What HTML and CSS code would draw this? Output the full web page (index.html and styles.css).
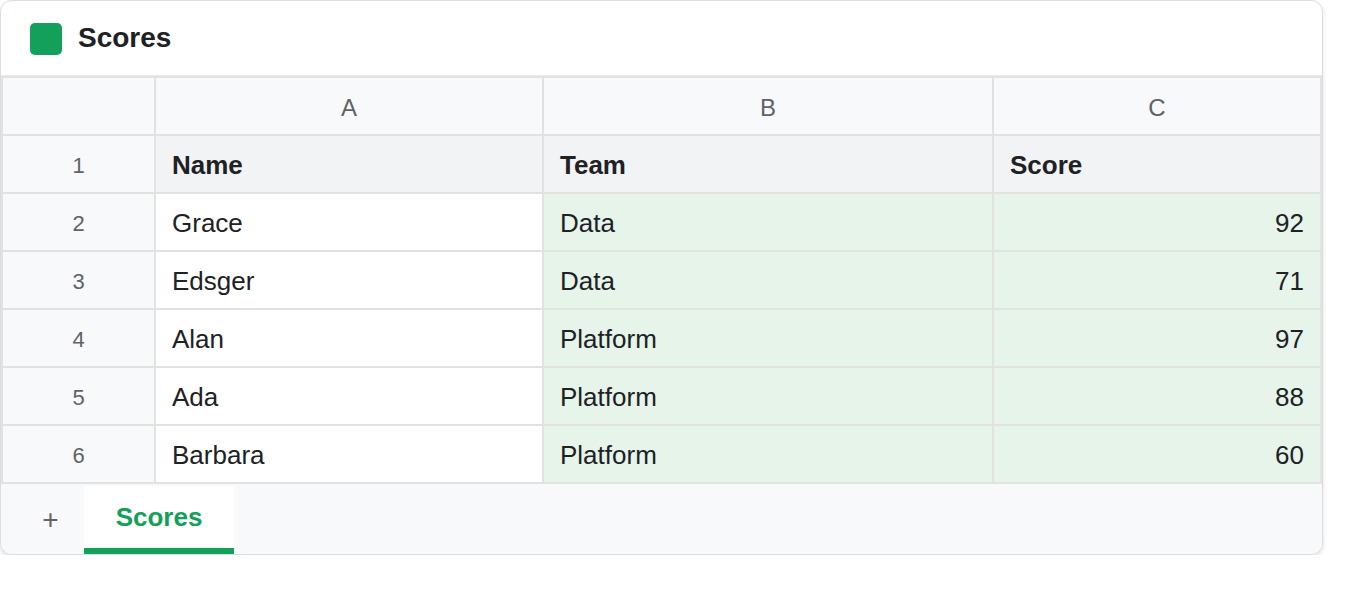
FILE: index.html
```html
<!DOCTYPE html>
<html lang="en">
<head>
<meta charset="utf-8">
<title>Scores</title>
<link rel="stylesheet" href="styles.css">
</head>
<body>
<div class="card">
  <div class="header">
    <span class="logo"></span>
    <h1 class="title">Scores</h1>
  </div>
  <div class="grid">
    <div class="cell corner"></div>
    <div class="cell colhead">A</div>
    <div class="cell colhead">B</div>
    <div class="cell colhead">C</div>

    <div class="cell rowhead">1</div>
    <div class="cell headrow">Name</div>
    <div class="cell headrow">Team</div>
    <div class="cell headrow">Score</div>

    <div class="cell rowhead">2</div>
    <div class="cell">Grace</div>
    <div class="cell hl">Data</div>
    <div class="cell hl num">92</div>

    <div class="cell rowhead">3</div>
    <div class="cell">Edsger</div>
    <div class="cell hl">Data</div>
    <div class="cell hl num">71</div>

    <div class="cell rowhead">4</div>
    <div class="cell">Alan</div>
    <div class="cell hl">Platform</div>
    <div class="cell hl num">97</div>

    <div class="cell rowhead">5</div>
    <div class="cell">Ada</div>
    <div class="cell hl">Platform</div>
    <div class="cell hl num">88</div>

    <div class="cell rowhead">6</div>
    <div class="cell">Barbara</div>
    <div class="cell hl">Platform</div>
    <div class="cell hl num">60</div>
  </div>
  <div class="tabs">
    <button class="add" type="button">+</button>
    <div class="tab active">Scores</div>
  </div>
</div>
</body>
</html>
```

FILE: styles.css
```css
html, body {
  margin: 0;
  padding: 0;
  background: #ffffff;
}

body {
  font-family: "Liberation Sans", Arial, sans-serif;
  color: #202124;
}

.card {
  width: 1323px;
  box-sizing: border-box;
  border: 1px solid #dcdde0;
  border-radius: 12px;
  overflow: hidden;
  background: #ffffff;
  box-shadow: 0 2px 4px rgba(0, 0, 0, 0.13);
}

.header {
  height: 74px;
  display: flex;
  align-items: center;
  gap: 16px;
  padding-left: 29px;
  border-bottom: 1px solid #e8eaed;
}

.logo {
  width: 32px;
  height: 32px;
  border-radius: 5px;
  background: #12a05a;
  margin-top: 1px;
}

.title {
  margin: 0;
  font-size: 28px;
  font-weight: 700;
  color: #202124;
}

.grid {
  display: grid;
  grid-template-columns: 151px 386px 448px 326px;
  grid-auto-rows: 56px;
  gap: 2px;
  padding: 2px;
  background: #e1e2e1;
}

.cell {
  display: flex;
  align-items: center;
  padding: 3px 16px 0;
  background: #ffffff;
  font-size: 26px;
  color: #202124;
  white-space: nowrap;
}

.corner {
  background: #f8f9fa;
}

.colhead {
  background: #f8f9fa;
  justify-content: center;
  font-size: 24px;
  color: #5f6368;
}

.rowhead {
  background: #f8f9fa;
  justify-content: center;
  font-size: 22px;
  color: #5f6368;
}

.headrow {
  background: #f1f3f4;
  font-weight: 700;
}

.hl {
  background: #e6f4ea;
}

.num {
  justify-content: flex-end;
}

.tabs {
  display: flex;
  align-items: flex-end;
  height: 68px;
  padding-top: 2px;
  padding-left: 16px;
  background: #f8f9fa;
}

.add {
  width: 67px;
  height: 62px;
  margin-bottom: 6px;
  border: 0;
  background: transparent;
  font-family: "Liberation Sans", Arial, sans-serif;
  font-size: 28px;
  color: #5f6368;
  padding: 6px 0 0;
}

.tab {
  width: 150px;
  height: 62px;
  display: flex;
  align-items: center;
  justify-content: center;
  background: #ffffff;
  border-bottom: 6px solid #12a05a;
  font-size: 26px;
  font-weight: 700;
  color: #12a05a;
}
```
